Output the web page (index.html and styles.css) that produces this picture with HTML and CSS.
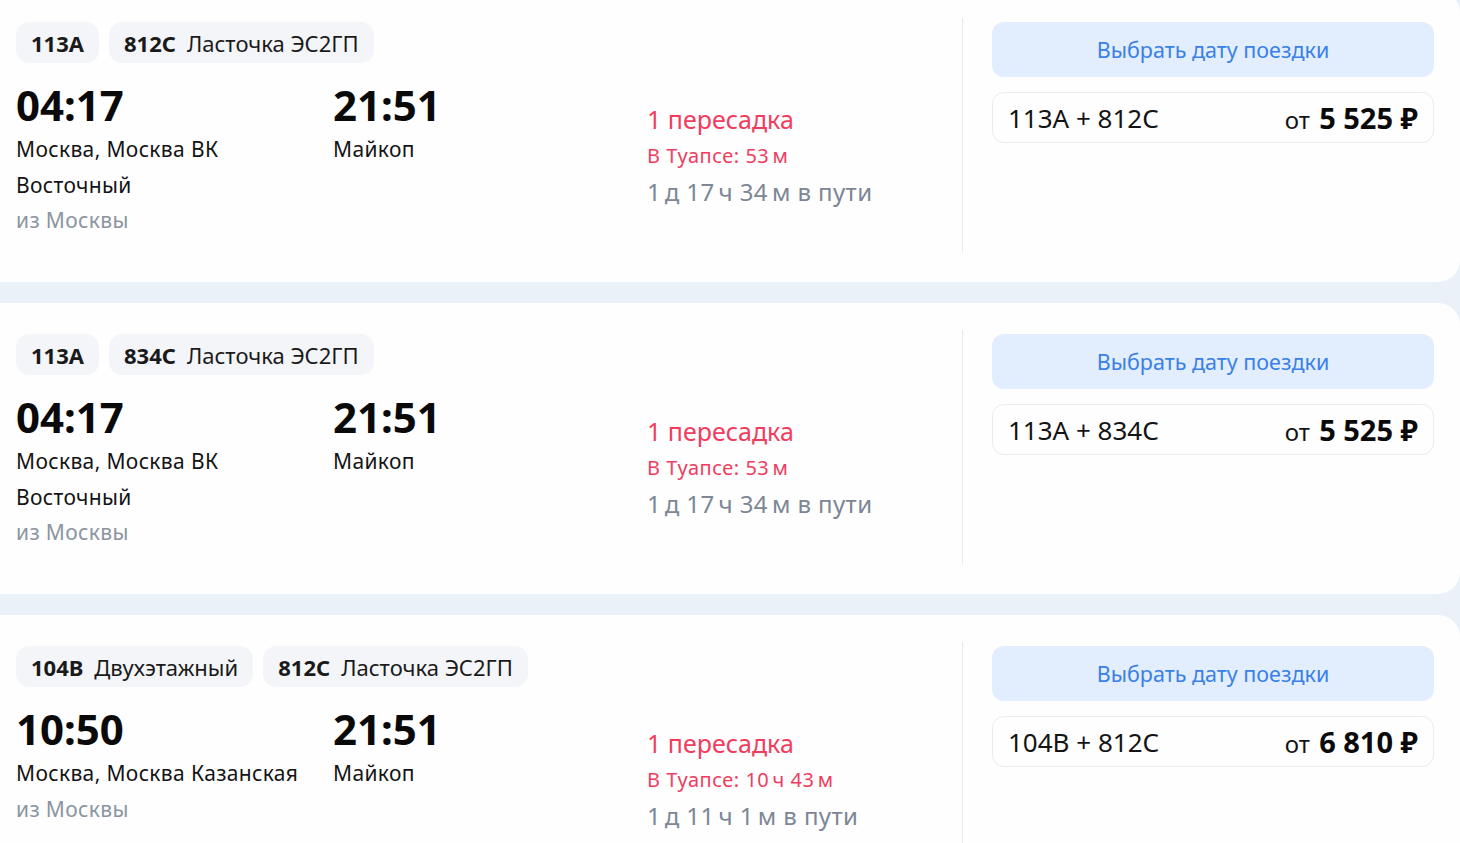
FILE: index.html
```html
<!DOCTYPE html>
<html lang="ru">
<head>
<meta charset="utf-8">
<title>Поезда</title>
<link rel="stylesheet" href="styles.css">
</head>
<body>
<div class="list">
  <div class="card">
    <div class="info">
      <div class="badges">
        <span class="badge"><b>113А</b></span>
        <span class="badge"><b>812С</b> Ласточка ЭС2ГП</span>
      </div>
      <div class="grid">
        <div class="col">
          <div class="time">04:17</div>
          <div class="place">Москва, Москва ВК<br>Восточный</div>
          <div class="from">из Москвы</div>
        </div>
        <div class="col">
          <div class="time">21:51</div>
          <div class="place">Майкоп</div>
        </div>
        <div class="col mid">
          <div class="transfer">1 пересадка</div>
          <div class="where">В Туапсе: 53&#8239;м</div>
          <div class="dur">1&#8239;д 17&#8239;ч 34&#8239;м в пути</div>
        </div>
      </div>
    </div>
    <div class="side">
      <div class="btn">Выбрать дату поездки</div>
      <div class="price"><span class="pair">113А + 812С</span><span class="cost">от <b>5 525 ₽</b></span></div>
    </div>
  </div>

  <div class="card">
    <div class="info">
      <div class="badges">
        <span class="badge"><b>113А</b></span>
        <span class="badge"><b>834С</b> Ласточка ЭС2ГП</span>
      </div>
      <div class="grid">
        <div class="col">
          <div class="time">04:17</div>
          <div class="place">Москва, Москва ВК<br>Восточный</div>
          <div class="from">из Москвы</div>
        </div>
        <div class="col">
          <div class="time">21:51</div>
          <div class="place">Майкоп</div>
        </div>
        <div class="col mid">
          <div class="transfer">1 пересадка</div>
          <div class="where">В Туапсе: 53&#8239;м</div>
          <div class="dur">1&#8239;д 17&#8239;ч 34&#8239;м в пути</div>
        </div>
      </div>
    </div>
    <div class="side">
      <div class="btn">Выбрать дату поездки</div>
      <div class="price"><span class="pair">113А + 834С</span><span class="cost">от <b>5 525 ₽</b></span></div>
    </div>
  </div>

  <div class="card">
    <div class="info">
      <div class="badges">
        <span class="badge"><b>104В</b> Двухэтажный</span>
        <span class="badge"><b>812С</b> Ласточка ЭС2ГП</span>
      </div>
      <div class="grid">
        <div class="col">
          <div class="time">10:50</div>
          <div class="place">Москва, Москва Казанская</div>
          <div class="from">из Москвы</div>
        </div>
        <div class="col">
          <div class="time">21:51</div>
          <div class="place">Майкоп</div>
        </div>
        <div class="col mid">
          <div class="transfer">1 пересадка</div>
          <div class="where">В Туапсе: 10&#8239;ч 43&#8239;м</div>
          <div class="dur">1&#8239;д 11&#8239;ч 1&#8239;м в пути</div>
        </div>
      </div>
    </div>
    <div class="side">
      <div class="btn">Выбрать дату поездки</div>
      <div class="price"><span class="pair">104В + 812С</span><span class="cost">от <b>6 810 ₽</b></span></div>
    </div>
  </div>
</div>
</body>
</html>
```

FILE: styles.css
```css
html, body {
  margin: 0;
  padding: 0;
  height: 843px;
  overflow: hidden;
  background: #ebf1f9;
}
body {
  font-family: "Noto Sans", "Open Sans", sans-serif;
  color: #111;
}
.list {
  display: flex;
  flex-direction: column;
  gap: 21px;
  margin: -9px 0 0 -20px;
  width: 1480px;
}
.card {
  display: flex;
  background: #fefefe;
  border-radius: 22px;
  height: 291px;
  box-sizing: border-box;
  padding: 27px 26px 29px 36px;
}
.info {
  flex: 1;
  padding-top: 4px;
}
.badges {
  display: flex;
  gap: 10px;
}
.badge {
  height: 41px;
  box-sizing: border-box;
  padding: 0 15px;
  border-radius: 13px;
  background: #f3f5f8;
  display: flex;
  align-items: center;
  gap: 11px;
  font-size: 22px;
  color: #1a1a1a;
}
.badge b {
  font-weight: 700;
}
.grid {
  display: grid;
  grid-template-columns: 317px 314px 1fr;
  margin-top: 18px;
}
.time {
  font-size: 42px;
  font-weight: 700;
  line-height: 48px;
  color: #0a0a0a;
}
.place {
  font-size: 21px;
  letter-spacing: 0.35px;
  line-height: 35.5px;
  margin-top: 3px;
  color: #141414;
}
.from {
  font-size: 21px;
  letter-spacing: 0.35px;
  line-height: 35.5px;
  color: #8b95a1;
}
.mid {
  padding-top: 20px;
}
.transfer {
  font-size: 25px;
  line-height: 36px;
  color: #f03d5f;
}
.where {
  font-size: 20px;
  letter-spacing: 0.5px;
  line-height: 36px;
  margin-top: 1px;
  color: #f03d5f;
}
.dur {
  font-size: 24px;
  letter-spacing: 0.4px;
  line-height: 35px;
  color: #7c8694;
}
.side {
  width: 442px;
  border-left: 1px solid #e7ebf0;
  padding-left: 29px;
  padding-top: 4px;
  display: flex;
  flex-direction: column;
  gap: 15px;
}
.btn {
  height: 55px;
  border-radius: 12px;
  background: #e2eefd;
  color: #3a80e6;
  font-size: 21.5px;
  display: flex;
  align-items: center;
  justify-content: center;
}
.price {
  height: 51px;
  box-sizing: border-box;
  border: 1px solid #e8ebef;
  border-radius: 12px;
  display: flex;
  align-items: center;
  justify-content: space-between;
  padding: 0 15px 0 15px;
}
.pair {
  font-size: 26px;
  color: #141414;
}
.cost {
  font-size: 24px;
  color: #141414;
}
.cost b {
  font-size: 29px;
  font-weight: 700;
  margin-left: 3px;
  color: #0a0a0a;
}
```
